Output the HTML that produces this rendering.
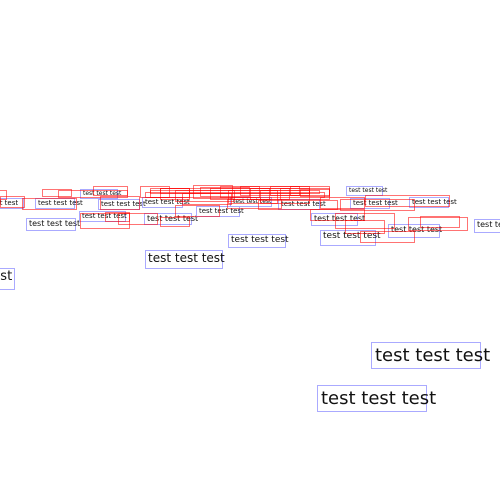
<!DOCTYPE html>
<html><head><style>
html,body{margin:0;padding:0;width:500px;height:500px;background:#fff;overflow:hidden;position:relative}
.t{position:absolute;border:1px solid #aaf;font-family:"DejaVu Sans",sans-serif;color:#111;white-space:nowrap;line-height:1;padding:1px 2px;box-sizing:border-box}
.r{position:absolute;border:1px solid rgba(255,0,0,.55);box-sizing:border-box}
</style></head><body>
<div class="t" style="left:-14px;top:198px;width:38px;height:11px;font-size:7px">test test</div>
<div class="t" style="left:35px;top:198px;width:40px;height:11px;font-size:7px">test test test</div>
<div class="t" style="left:26px;top:218px;width:50px;height:13px;font-size:8px">test test test</div>
<div class="t" style="left:79px;top:211px;width:47px;height:11px;font-size:7px">test test test</div>
<div class="t" style="left:80px;top:189px;width:38px;height:10px;font-size:6px">test test test</div>
<div class="t" style="left:98px;top:199px;width:42px;height:11px;font-size:7px">test test test</div>
<div class="t" style="left:142px;top:197px;width:41px;height:11px;font-size:7px">test test test</div>
<div class="t" style="left:144px;top:213px;width:48px;height:12px;font-size:8px">test test test</div>
<div class="t" style="left:196px;top:206px;width:44px;height:11px;font-size:7px">test test test</div>
<div class="t" style="left:230px;top:197px;width:42px;height:10px;font-size:6px">test test test</div>
<div class="t" style="left:278px;top:199px;width:42px;height:11px;font-size:7px">test test test</div>
<div class="t" style="left:228px;top:234px;width:58px;height:14px;font-size:9px">test test test</div>
<div class="t" style="left:145px;top:250px;width:78px;height:19px;font-size:12px">test test test</div>
<div class="t" style="left:-74px;top:268px;width:89px;height:22px;font-size:13px">test test test</div>
<div class="t" style="left:311px;top:213px;width:47px;height:13px;font-size:8px">test test test</div>
<div class="t" style="left:320px;top:230px;width:56px;height:16px;font-size:9px">test test test</div>
<div class="t" style="left:388px;top:224px;width:52px;height:14px;font-size:8px">test test test</div>
<div class="t" style="left:409px;top:197px;width:40px;height:11px;font-size:7px">test test test</div>
<div class="t" style="left:346px;top:186px;width:37px;height:10px;font-size:6px">test test test</div>
<div class="t" style="left:350px;top:198px;width:40px;height:11px;font-size:7px">test test test</div>
<div class="t" style="left:474px;top:219px;width:50px;height:14px;font-size:8px">test test test</div>
<div class="t" style="left:371px;top:342px;width:110px;height:27px;font-size:18px;padding:4px 3px">test test test</div>
<div class="t" style="left:317px;top:385px;width:110px;height:27px;font-size:18px;padding:4px 3px">test test test</div>

<div class="r" style="left:-5px;top:190px;width:12px;height:10px"></div>
<div class="r" style="left:0;top:196px;width:25px;height:12px"></div>
<div class="r" style="left:22px;top:198px;width:55px;height:12px"></div>
<div class="r" style="left:42px;top:189px;width:30px;height:8px"></div>
<div class="r" style="left:58px;top:190px;width:70px;height:8px"></div>
<div class="r" style="left:80px;top:213px;width:50px;height:16px"></div>
<div class="r" style="left:93px;top:186px;width:35px;height:10px"></div>
<div class="r" style="left:105px;top:212px;width:25px;height:10px"></div>
<div class="r" style="left:118px;top:213px;width:40px;height:12px"></div>
<div class="r" style="left:140px;top:186px;width:30px;height:12px"></div>
<div class="r" style="left:150px;top:188px;width:40px;height:10px"></div>
<div class="r" style="left:160px;top:188px;width:30px;height:12px"></div>
<div class="r" style="left:175px;top:190px;width:60px;height:12px"></div>
<div class="r" style="left:182px;top:193px;width:50px;height:12px"></div>
<div class="r" style="left:193px;top:185px;width:40px;height:14px"></div>
<div class="r" style="left:200px;top:187px;width:50px;height:10px"></div>
<div class="r" style="left:210px;top:188px;width:60px;height:12px"></div>
<div class="r" style="left:220px;top:186px;width:40px;height:12px"></div>
<div class="r" style="left:228px;top:190px;width:50px;height:14px"></div>
<div class="r" style="left:240px;top:186px;width:60px;height:10px"></div>
<div class="r" style="left:250px;top:188px;width:40px;height:12px"></div>
<div class="r" style="left:260px;top:190px;width:50px;height:14px"></div>
<div class="r" style="left:270px;top:186px;width:40px;height:10px"></div>
<div class="r" style="left:280px;top:188px;width:50px;height:12px"></div>
<div class="r" style="left:290px;top:186px;width:40px;height:10px"></div>
<div class="r" style="left:300px;top:189px;width:30px;height:8px"></div>
<div class="r" style="left:145px;top:192px;width:180px;height:6px"></div>
<div class="r" style="left:150px;top:190px;width:170px;height:4px"></div>
<div class="r" style="left:160px;top:188px;width:150px;height:6px"></div>
<div class="r" style="left:227px;top:199px;width:55px;height:10px"></div>
<div class="r" style="left:258px;top:200px;width:80px;height:10px"></div>
<div class="r" style="left:320px;top:197px;width:45px;height:12px"></div>
<div class="r" style="left:340px;top:199px;width:75px;height:12px"></div>
<div class="r" style="left:310px;top:209px;width:55px;height:12px"></div>
<div class="r" style="left:335px;top:213px;width:60px;height:16px"></div>
<div class="r" style="left:345px;top:220px;width:40px;height:14px"></div>
<div class="r" style="left:360px;top:231px;width:55px;height:12px"></div>
<div class="r" style="left:408px;top:217px;width:60px;height:14px"></div>
<div class="r" style="left:420px;top:216px;width:40px;height:12px"></div>
<div class="r" style="left:175px;top:205px;width:45px;height:12px"></div>
<div class="r" style="left:160px;top:217px;width:30px;height:10px"></div>
<div class="r" style="left:100px;top:196px;width:40px;height:14px"></div>
<div class="r" style="left:365px;top:195px;width:85px;height:12px"></div>
</body></html>
